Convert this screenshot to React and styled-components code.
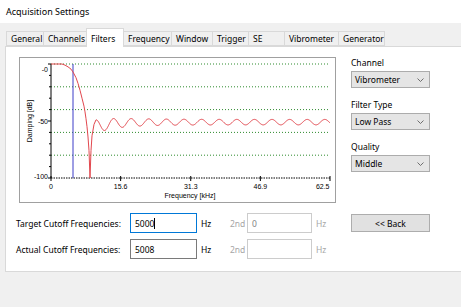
import React from 'react'
import styled, { createGlobalStyle } from 'styled-components'

const GlobalStyle = createGlobalStyle`
  html, body {
    margin: 0;
    padding: 0;
  }
  body {
    width: 461px;
    height: 307px;
    overflow: hidden;
    background: #f0f0f0;
    font-family: "Noto Sans", "Open Sans", sans-serif;
    font-size: 8.5px;
    color: #000;
  }
`

const Window = styled.div`
  display: flex;
  flex-direction: column;
  height: 307px;
`
const TitleBar = styled.div`
  height: 23px;
  display: flex;
  align-items: center;
  padding-left: 6px;
  background: #fff;
  font-size: 9px;
`
const Body = styled.div`
  display: flex;
  flex-direction: column;
  padding: 5px 0 0 5px;
`
const TabStrip = styled.div`
  display: flex;
  align-items: flex-end;
  height: 18px;
  padding-left: 1px;
`
const Tab = styled.div`
  box-sizing: border-box;
  width: ${p => p.w}px;
  height: ${p => (p.active ? 19 : 15)}px;
  margin-bottom: ${p => (p.active ? -1 : 0)}px;
  margin-right: -1px;
  padding-left: 4px;
  display: flex;
  align-items: center;
  border: 1px solid #d9d9d9;
  border-bottom: ${p => (p.active ? 'none' : '1px solid #d9d9d9')};
  background: ${p => (p.active ? '#fff' : '#f0f0f0')};
  position: relative;
  z-index: ${p => (p.active ? 1 : 0)};
  white-space: nowrap;
`
const Panel = styled.div`
  box-sizing: border-box;
  width: 470px;
  height: 226px;
  padding: 10px 0 0 10px;
  background: #fff;
  border: 1px solid #d9d9d9;
`
const TopRow = styled.div`
  display: flex;
`
const ChartFrame = styled.div`
  box-sizing: border-box;
  width: 317px;
  height: 146px;
  margin-left: 3px;
  border: 1px solid #a0a0a0;
  background: #fff;
  svg {
    display: block;
  }
`
const Side = styled.div`
  display: flex;
  flex-direction: column;
  gap: 11px;
  margin-left: 15px;
`
const Field = styled.div`
  display: flex;
  flex-direction: column;
  gap: 2px;
`
const FieldLabel = styled.div`
  height: 12px;
  line-height: 12px;
`
const Select = styled.div`
  box-sizing: border-box;
  width: 79px;
  height: 17px;
  display: flex;
  align-items: center;
  justify-content: space-between;
  padding: 0 5px 0 3px;
  background: #e5e5e5;
  border: 1px solid #acacac;
`
const Rows = styled.div`
  display: grid;
  grid-template-columns: 114px 67px 33px 17px 65px 39px 79px;
  grid-auto-rows: 20px;
  row-gap: 6px;
  margin-top: 10px;
  align-items: center;
`
const Label = styled.div`
  white-space: nowrap;
  color: ${p => (p.disabled ? '#a6a6a6' : '#000')};
  padding-left: ${p => p.pad || 0}px;
`
const TextBox = styled.div`
  box-sizing: border-box;
  height: 20px;
  display: flex;
  align-items: center;
  padding-left: 4px;
  border: 1px solid ${p => (p.focused ? '#0078d7' : p.disabled ? '#cccccc' : '#7a7a7a')};
  color: ${p => (p.disabled ? '#838383' : '#000')};
  background: #fff;
`
const Caret = styled.span`
  display: inline-block;
  width: 1px;
  height: 11px;
  background: #000;
`
const Button = styled.div`
  box-sizing: border-box;
  height: 18px;
  display: flex;
  align-items: center;
  justify-content: center;
  background: #e1e1e1;
  border: 1px solid #adadad;
`

const tabs = [
  ['General', 38],
  ['Channels', 44],
  ['Filters', 38],
  ['Frequency', 49],
  ['Window', 42],
  ['Trigger', 37],
  ['SE', 37],
  ['Vibrometer', 55],
  ['Generator', 47],
]

function Chevron() {
  return (
    <svg width="7" height="4" viewBox="0 0 7 4">
      <path d="M0.5 0.5 L3.5 3.5 L6.5 0.5" fill="none" stroke="#606060" strokeWidth="0.9" />
    </svg>
  )
}

// plot geometry inside the frame
const X0 = 31
const X1 = 310
const Y0 = 6
const K = 1.14
const yOf = db => Y0 - db * K

function curve() {
  const key = [
    [31, 0], [42, 0], [45, -1], [48, -2.5], [51, -4.5], [53, -7], [56, -12], [58, -17],
    [60, -23], [62, -30], [64, -37], [65, -42], [66, -48], [67, -55], [68, -64],
    [69, -76], [70, -100], [71, -76], [72, -63], [74, -53],
  ]
  const pts = key.map(([x, d]) => [x, d])
  for (let x = 76; x <= X1; x += 0.5) {
    const t = x - 76
    const c = -51 - 4 * Math.exp(-t / 15)
    const a = 2.4 + 3.6 * Math.exp(-t / 30)
    pts.push([x, c + a * Math.cos((2 * Math.PI * t) / 17.6)])
  }
  return pts.map(([x, d]) => `${x.toFixed(1)},${yOf(d).toFixed(2)}`).join(' ')
}

function Chart() {
  const grid = [0, -20, -40, -60, -80]
  const yTicks = [0, -10, -20, -30, -40, -50, -60, -70, -80, -90, -100]
  const xTicks = [['0', 0], ['15.6', 15.6], ['31.3', 31.3], ['46.9', 46.9], ['62.5', 62.5]]
  const xOf = f => X0 + (f / 62.5) * (X1 - X0)
  const fontStyle = { fontFamily: '"Liberation Sans", Arial, sans-serif', fontSize: 7 }
  return (
    <svg width="315" height="144" viewBox="0 0 315 144">
      {grid.map(d => (
        <line key={d} x1={X0} x2={X1} y1={yOf(d)} y2={yOf(d)} stroke="#2e8b2e" strokeWidth="1" strokeDasharray="1 2" />
      ))}
      <line x1={X0} x2={X1 + 1} y1={yOf(-100)} y2={yOf(-100)} stroke="#000" strokeWidth="1" strokeDasharray="1.5 1" />
      <line x1={X0} x2={X0} y1={Y0} y2={yOf(-100)} stroke="#000" strokeWidth="1" />
      {yTicks.map(d => (
        <line key={d} x1={X0 - (d % 50 === 0 ? 3 : 2)} x2={X0} y1={yOf(d)} y2={yOf(d)} stroke="#000" strokeWidth="1" />
      ))}
      {xTicks.map(([l, f]) => (
        <line key={l} x1={xOf(f)} x2={xOf(f)} y1={yOf(-100) - 2} y2={yOf(-100) + 3} stroke="#000" strokeWidth="1" />
      ))}
      <line x1="53" x2="53" y1={Y0} y2={yOf(-100)} stroke="#3c3cc8" strokeWidth="1" />
      <polyline points={curve()} fill="none" stroke="#e2474e" strokeWidth="1" />
      <text x="28" y="14" textAnchor="end" style={fontStyle}>-0</text>
      <text x="28" y={yOf(-50) + 2.5} textAnchor="end" style={fontStyle}>-50</text>
      <text x="28" y={yOf(-100) + 1} textAnchor="end" style={fontStyle}>-100</text>
      {xTicks.map(([l, f], i) => (
        <text
          key={l}
          x={i === xTicks.length - 1 ? X1 - 0.5 : xOf(f)}
          y="131"
          textAnchor={i === xTicks.length - 1 ? 'end' : 'middle'}
          style={fontStyle}
        >
          {l}
        </text>
      ))}
      <text x="170" y="139.5" textAnchor="middle" style={fontStyle}>Frequency [kHz]</text>
      <text x="12" y="63" textAnchor="middle" transform="rotate(-90 12 63)" style={fontStyle}>Damping [dB]</text>
    </svg>
  )
}

export default function App() {
  return (
    <Window>
      <GlobalStyle />
      <TitleBar>Acquisition Settings</TitleBar>
      <Body>
        <TabStrip>
          {tabs.map(([name, w]) => (
            <Tab key={name} w={w} active={name === 'Filters'}>{name}</Tab>
          ))}
        </TabStrip>
        <Panel>
          <TopRow>
            <ChartFrame>
              <Chart />
            </ChartFrame>
            <Side>
              <Field>
                <FieldLabel>Channel</FieldLabel>
                <Select>Vibrometer<Chevron /></Select>
              </Field>
              <Field>
                <FieldLabel>Filter Type</FieldLabel>
                <Select>Low Pass<Chevron /></Select>
              </Field>
              <Field>
                <FieldLabel>Quality</FieldLabel>
                <Select>Middle<Chevron /></Select>
              </Field>
            </Side>
          </TopRow>
          <Rows>
            <Label>Target Cutoff Frequencies:</Label>
            <TextBox focused>5000<Caret /></TextBox>
            <Label pad={4}>Hz</Label>
            <Label disabled>2nd</Label>
            <TextBox disabled>0</TextBox>
            <Label disabled pad={4}>Hz</Label>
            <Button>&lt;&lt; Back</Button>

            <Label>Actual Cutoff Frequencies:</Label>
            <TextBox>5008</TextBox>
            <Label pad={4}>Hz</Label>
            <Label disabled>2nd</Label>
            <TextBox disabled />
            <Label disabled pad={4}>Hz</Label>
          </Rows>
        </Panel>
      </Body>
    </Window>
  )
}
